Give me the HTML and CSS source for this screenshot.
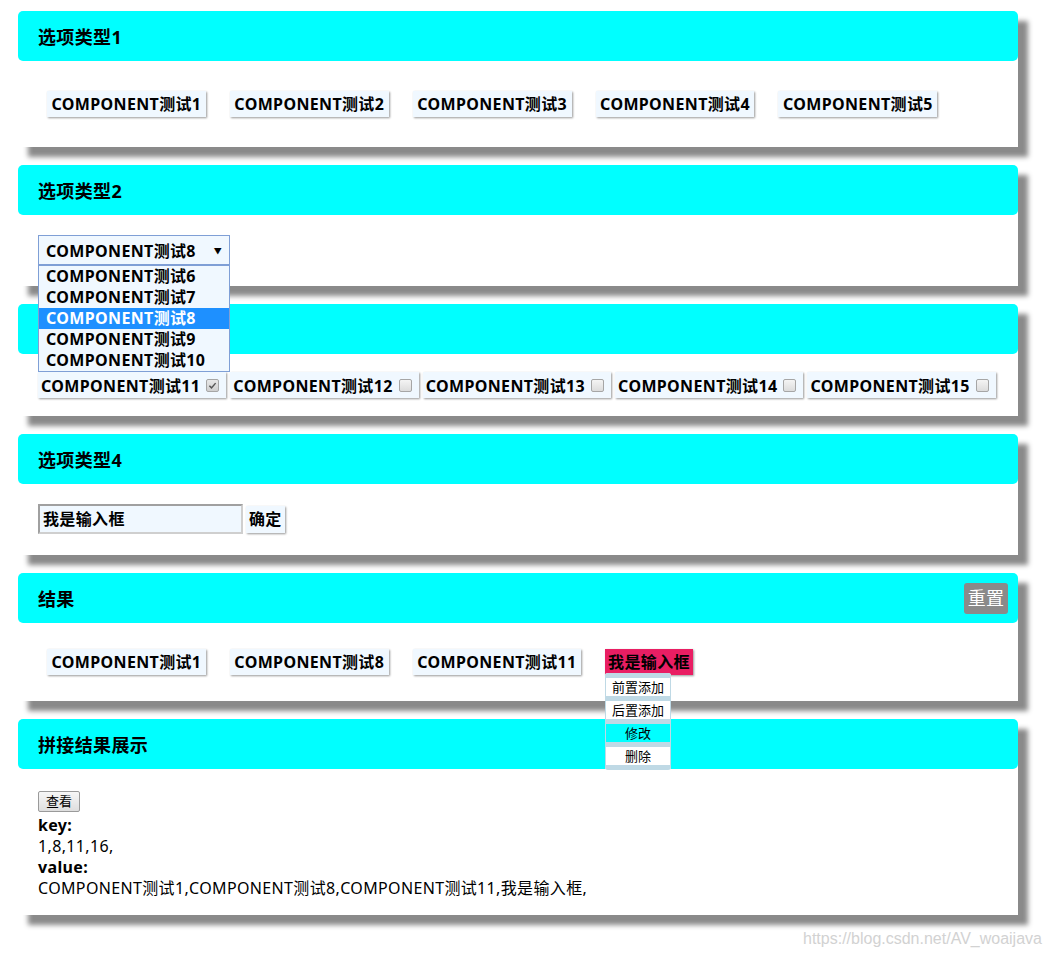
FILE: index.html
```html
<!DOCTYPE html>
<html lang="zh-CN">
<head>
<meta charset="utf-8">
<title>选项</title>
<link rel="stylesheet" href="styles.css">
</head>
<body>
<div class="page">
  <section class="card">
    <div class="card-head">选项类型1</div>
    <div class="card-body row">
      <span class="chip">COMPONENT测试1</span>
      <span class="chip">COMPONENT测试2</span>
      <span class="chip">COMPONENT测试3</span>
      <span class="chip">COMPONENT测试4</span>
      <span class="chip">COMPONENT测试5</span>
    </div>
  </section>

  <section class="card">
    <div class="card-head">选项类型2</div>
    <div class="card-body select-body">
      <div class="select">
        <span class="select-value">COMPONENT测试8</span>
        <span class="select-arrow">▼</span>
        <ul class="select-list">
          <li>COMPONENT测试6</li>
          <li>COMPONENT测试7</li>
          <li class="active">COMPONENT测试8</li>
          <li>COMPONENT测试9</li>
          <li>COMPONENT测试10</li>
        </ul>
      </div>
    </div>
  </section>

  <section class="card">
    <div class="card-head">选项类型3</div>
    <div class="card-body check-body">
      <label class="check">COMPONENT测试11<span class="box checked"><svg viewBox="0 0 12 12" width="12" height="12"><path d="M2.6 6.3 L4.9 8.6 L9.4 3.4" fill="none" stroke="#555" stroke-width="1.6"/></svg></span></label>
      <label class="check">COMPONENT测试12<span class="box"></span></label>
      <label class="check">COMPONENT测试13<span class="box"></span></label>
      <label class="check">COMPONENT测试14<span class="box"></span></label>
      <label class="check">COMPONENT测试15<span class="box"></span></label>
    </div>
  </section>

  <section class="card">
    <div class="card-head">选项类型4</div>
    <div class="card-body input-body">
      <div class="input">我是输入框</div>
      <span class="ok-btn">确定</span>
    </div>
  </section>

  <section class="card">
    <div class="card-head">结果<span class="reset">重置</span></div>
    <div class="card-body row result-body">
      <span class="chip">COMPONENT测试1</span>
      <span class="chip">COMPONENT测试8</span>
      <span class="chip">COMPONENT测试11</span>
      <span class="chip-wrap">
        <span class="chip pink">我是输入框</span>
        <span class="menu">
          <span class="menu-item">前置添加</span>
          <span class="menu-item">后置添加</span>
          <span class="menu-item clear">修改</span>
          <span class="menu-item">删除</span>
        </span>
      </span>
    </div>
  </section>

  <section class="card">
    <div class="card-head">拼接结果展示</div>
    <div class="card-body show-body">
      <span class="view-btn">查看</span>
      <div class="line bold">key:</div>
      <div class="line">1,8,11,16,</div>
      <div class="line bold">value:</div>
      <div class="line">COMPONENT测试1,COMPONENT测试8,COMPONENT测试11,我是输入框,</div>
    </div>
  </section>
</div>
<div class="watermark">https://blog.csdn.net/AV_woaijava</div>
</body>
</html>
```

FILE: styles.css
```css
html, body {
  margin: 0;
  padding: 0;
  background: #fff;
}
body {
  font-family: "Noto Sans", "Noto Sans CJK SC", sans-serif;
  font-size: 16px;
  letter-spacing: 0.35px;
  color: #000;
  position: relative;
  height: 957px;
  overflow: hidden;
}
.page {
  width: 1000px;
  padding: 11px 0 0 18px;
  display: flex;
  flex-direction: column;
  gap: 18px;
}
.card {
  background: #fff;
  box-shadow: 10px 10px 5px #8a8a8a;
}
.card-head {
  height: 50px;
  background: #00ffff;
  border-radius: 5px;
  padding: 0 10px 0 20px;
  display: flex;
  align-items: center;
  justify-content: space-between;
  font-size: 18px;
  font-weight: bold;
}
.card-body {
  padding: 20px;
}
.row {
  display: flex;
  gap: 24px;
  padding: 30px 29px;
}
.chip {
  display: block;
  height: 26px;
  line-height: 26px;
  padding: 0 4.5px;
  background: #f0f8ff;
  box-shadow: 1px 1px 2px #999;
  font-weight: bold;
  font-size: 16px;
  white-space: nowrap;
}
.select-body {
  padding: 20px 20px 21px;
}
.select {
  position: relative;
  width: 192px;
  height: 30px;
  box-sizing: border-box;
  border: 1px solid #7f9fd6;
  background: #f0f8ff;
  display: flex;
  align-items: center;
  justify-content: space-between;
  padding: 0 7px 0 7px;
  font-weight: bold;
}
.select-arrow {
  font-size: 8px;
  color: #000;
}
.select-list {
  position: absolute;
  z-index: 10;
  left: -1px;
  top: 29px;
  width: 192px;
  box-sizing: border-box;
  margin: 0;
  padding: 0;
  list-style: none;
  border: 1px solid #7f9fd6;
  background: #f0f8ff;
}
.select-list li {
  height: 21px;
  line-height: 21px;
  padding-left: 7px;
  white-space: nowrap;
}
.select-list li.active {
  background: #1e90ff;
  color: #fff;
}
.check-body {
  display: flex;
  gap: 4px;
  padding: 18px 20px 18px;
}
.check {
  display: flex;
  align-items: center;
  height: 26px;
  padding: 0 7px 0 3px;
  background: #f0f8ff;
  box-shadow: 1px 1px 2px #999;
  font-weight: bold;
  white-space: nowrap;
}
.box {
  display: inline-flex;
  align-items: center;
  justify-content: center;
  width: 11px;
  height: 11px;
  margin-left: 6px;
  border: 1px solid #a6a6a6;
  border-radius: 2px;
  background: linear-gradient(#f4f4f4, #dcdcdc);
}
.box svg {
  width: 11px;
  height: 11px;
}
.box.checked {
  background: linear-gradient(#e8e8e8, #cfcfcf);
}
.input-body {
  display: flex;
  align-items: center;
  gap: 3px;
  padding: 20px 20px 21px;
}
.input {
  width: 205px;
  height: 30px;
  box-sizing: border-box;
  border: 2px solid;
  border-color: #a0a0a0 #cfcfcf #cfcfcf #a0a0a0;
  background: #f0f8ff;
  line-height: 26px;
  padding-left: 3px;
  font-weight: bold;
}
.ok-btn {
  height: 27px;
  line-height: 27px;
  padding: 0 3px;
  background: #f0f8ff;
  box-shadow: 1px 1px 2px #999;
  font-weight: bold;
}
.reset {
  background: #8a8a8a;
  color: #fff;
  font-weight: normal;
  font-size: 18px;
  width: 44px;
  height: 31px;
  line-height: 31px;
  text-align: center;
  border-radius: 3px;
}
.result-body {
  padding: 26px 29px;
}
.chip-wrap {
  position: relative;
}
.chip.pink {
  background: #e91e63;
  padding: 0 3px;
}
.menu {
  position: absolute;
  left: 0;
  top: 24px;
  width: 66px;
  display: flex;
  flex-direction: column;
  border-radius: 3px;
  overflow: hidden;
  z-index: 5;
  letter-spacing: 0;
}
.menu-item {
  display: block;
  height: 18px;
  line-height: 18px;
  font-size: 13px;
  text-align: center;
  background: #fff;
  border-top: 5px solid #bfd9e5;
  border-left: 1px solid #bfd9e5;
  border-right: 1px solid #bfd9e5;
  white-space: nowrap;
}
.menu-item:last-child {
  border-bottom: 5px solid #bfd9e5;
}
.menu-item.clear {
  background: transparent;
}
.show-body {
  padding: 22px 20px 16px;
}
.view-btn {
  display: inline-block;
  height: 21px;
  line-height: 19px;
  box-sizing: border-box;
  padding: 0 7px;
  font-size: 13px;
  letter-spacing: 0;
  border: 1px solid #9a9a9a;
  border-radius: 2px;
  background: linear-gradient(#f7f7f7, #dedede);
  margin-bottom: 3px;
  vertical-align: top;
}
.line {
  line-height: 21px;
  font-size: 16px;
}
.bold {
  font-weight: bold;
}
.watermark {
  position: absolute;
  left: 803px;
  top: 930px;
  font-family: "Liberation Sans", Arial, sans-serif;
  font-size: 16px;
  letter-spacing: 0;
  color: #d2d2d2;
}
```
